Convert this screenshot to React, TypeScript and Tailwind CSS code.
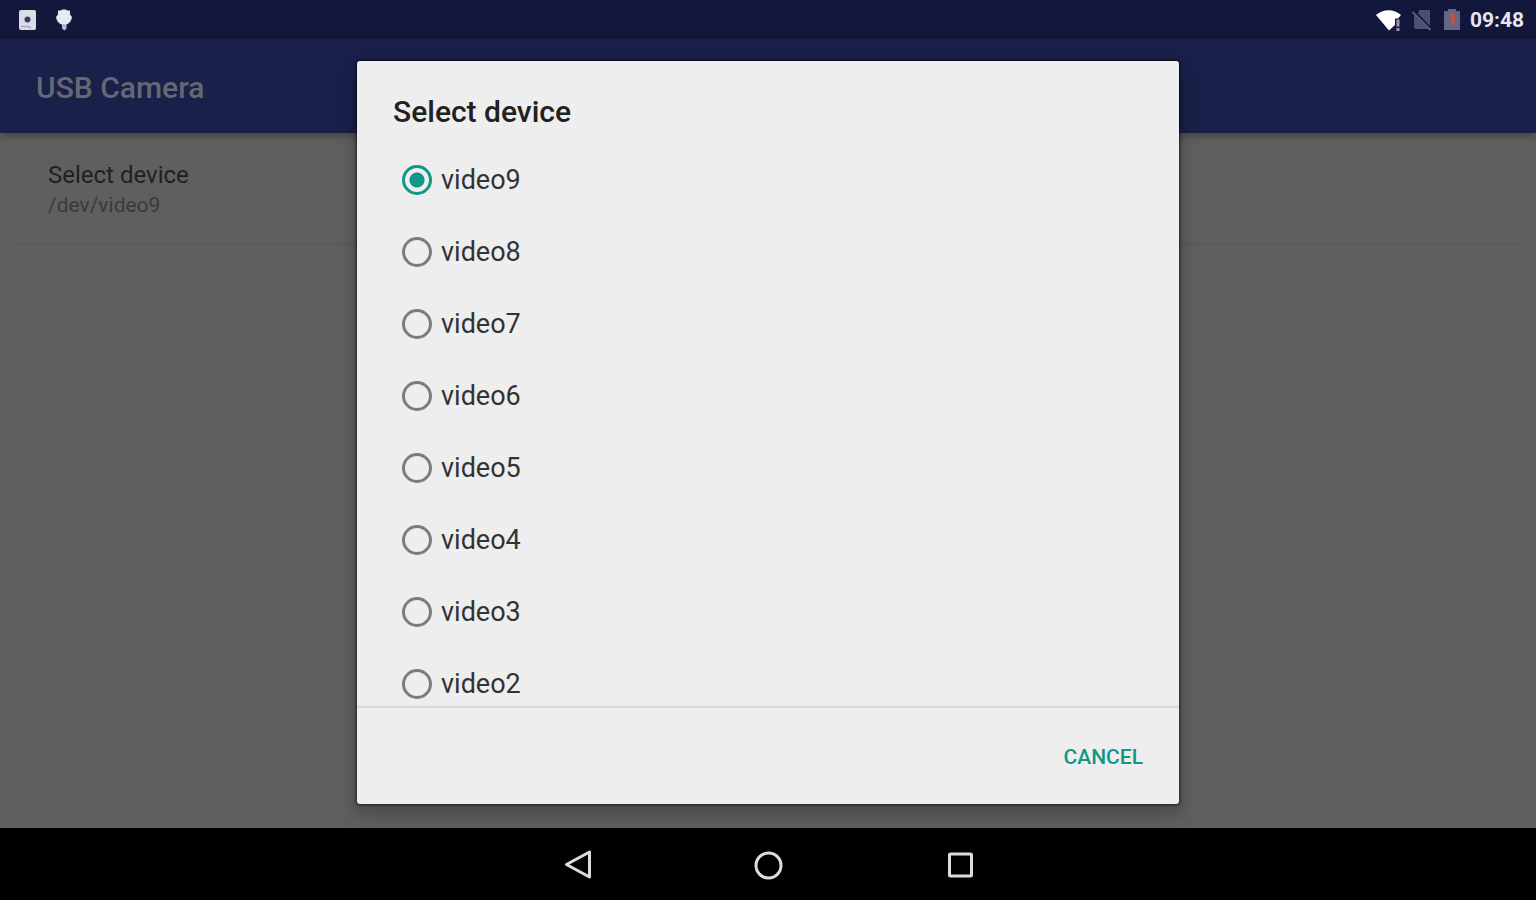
import { useState } from "react";

const DEVICES = [
  "video9",
  "video8",
  "video7",
  "video6",
  "video5",
  "video4",
  "video3",
  "video2",
];

function StatusBar() {
  return (
    <div className="flex h-[39px] shrink-0 items-center justify-between bg-[#12173b] pr-3 pl-4">
      <div className="flex items-center gap-3">
        <svg viewBox="0 0 24 24" className="size-6" fill="none">
          <rect x="3" y="2" width="17" height="20" rx="2" fill="#dcdce8" />
          <circle cx="11.5" cy="11.5" r="3" fill="#3a3c62" />
          <path d="M5 18.500h7l3 1.500" stroke="#a9abc4" strokeWidth="1.5" />
        </svg>
        <svg viewBox="0 0 24 24" className="size-6" fill="#e8e8f2">
          <path d="M6 2.500h3l1-1h4l1 1h3v4l2 2.500c-.5 4-3 6.500-5.500 7.500h-5C7 15.500 4.500 13 4 9l2-2.500z" />
          <path d="M10 16h4.500v4.500l-2 2-2.500-2z" fill="#b9bbd0" />
        </svg>
      </div>
      <div className="flex items-center gap-2">
        <svg viewBox="0 0 28 24" className="h-6 w-7">
          <path d="M2 7C9 .5 20 .5 27 7L24 10.500h-3V17l-6 5.500z" fill="#fff" />
          <path d="M22.500 11.500h3v7h-3zM22.500 20h3v3h-3z" fill="#9698ae" />
        </svg>
        <svg viewBox="0 0 24 24" className="size-6">
          <path
            d="M9 2h11v16L8 5.500zM4 7L18.500 21H6a2 2 0 0 1-2-2z"
            fill="#4d5071"
          />
          <path d="M2.500 4l18 18" stroke="#5c5f7e" strokeWidth="1.8" />
        </svg>
        <svg viewBox="0 0 20 24" className="h-6 w-5">
          <path d="M6 1h8v2h4v19H2V3h4z" fill="#656782" />
          <path d="M9 6h4v6l-1 6h-2l-1.500-6z" fill="#b8584a" />
        </svg>
        <span className="text-[21px] leading-6 font-bold text-[#e6e6ee]">
          09:48
        </span>
      </div>
    </div>
  );
}

function NavBar() {
  return (
    <nav className="flex h-[72px] shrink-0 items-center justify-center gap-36 bg-black text-[#dcdcdc]">
      <button type="button" aria-label="Back" className="p-2">
        <svg viewBox="0 0 32 32" className="size-8" fill="none">
          <path
            d="M6.500 16.500L29.500 4v25z"
            stroke="currentColor"
            strokeWidth="3"
            strokeLinejoin="round"
          />
        </svg>
      </button>
      <button type="button" aria-label="Home" className="p-2">
        <svg viewBox="0 0 32 32" className="size-8" fill="none">
          <circle
            cx="16.5"
            cy="17.5"
            r="12.5"
            stroke="currentColor"
            strokeWidth="3"
          />
        </svg>
      </button>
      <button type="button" aria-label="Recent apps" className="p-2">
        <svg viewBox="0 0 32 32" className="size-8" fill="none">
          <rect
            x="5.5"
            y="6"
            width="22"
            height="22"
            rx="1"
            stroke="currentColor"
            strokeWidth="3"
          />
        </svg>
      </button>
    </nav>
  );
}

function DeviceRow({
  name,
  checked,
  onSelect,
}: {
  name: string;
  checked: boolean;
  onSelect: (name: string) => void;
}) {
  return (
    <label className="flex h-[72px] items-center gap-[9px] pl-[45px] text-[27px] text-[#333333]">
      <input
        type="radio"
        name="device"
        value={name}
        checked={checked}
        onChange={() => onSelect(name)}
        className="size-[30px] appearance-none rounded-full border-3 border-[#7c7c7c] checked:border-[#109786] checked:bg-[radial-gradient(circle,#109786_7px,transparent_8px)]"
      />
      {name}
    </label>
  );
}

function DeviceDialog() {
  const [selected, setSelected] = useState("video9");

  return (
    <div className="absolute inset-0 flex items-center justify-center pt-[61px] pb-6">
      <div
        role="dialog"
        aria-labelledby="dialog-title"
        className="flex max-h-full w-[822px] max-w-full flex-col rounded-[3px] bg-[#eeeeee] shadow-[0_0_3px_1px_rgba(0,0,0,0.6),0_8px_16px_4px_rgba(0,0,0,0.2)]"
      >
        <h2
          id="dialog-title"
          className="shrink-0 px-9 pt-[33px] pb-[14px] text-[30px] leading-9 font-medium text-[#212121]"
        >
          Select device
        </h2>
        <div className="min-h-0 overflow-y-auto [scrollbar-width:none]">
          {DEVICES.map((name) => (
            <DeviceRow
              key={name}
              name={name}
              checked={name === selected}
              onSelect={setSelected}
            />
          ))}
        </div>
        <div className="flex h-[98px] shrink-0 items-center justify-end border-t-2 border-[#d9d9d9] px-6 pt-1">
          <button
            type="button"
            className="px-3 py-2 text-[21px] font-medium text-[#109786]"
          >
            CANCEL
          </button>
        </div>
      </div>
    </div>
  );
}

export default function App() {
  return (
    <div className="flex h-screen flex-col font-[Roboto,sans-serif]">
      <div className="relative flex min-h-0 flex-1 flex-col bg-[#5f5f5f]">
        <StatusBar />
        <header className="flex h-[94px] shrink-0 items-center bg-[#192049] px-9 pt-1 shadow-[0_4px_6px_rgba(0,0,0,0.25)]">
          <h1 className="text-[30px] leading-9 font-medium text-[#656874]">
            USB Camera
          </h1>
        </header>
        <main className="px-4 pr-3">
          <button
            type="button"
            className="block h-28 w-full border-b border-[#555555] px-8 text-left"
          >
            <span className="block text-[24px] leading-8 text-[#1f1f1f]">
              Select device
            </span>
            <span className="block text-[21px] leading-7 text-[#3a3a3a]">
              /dev/video9
            </span>
          </button>
        </main>
        <DeviceDialog />
      </div>
      <NavBar />
    </div>
  );
}
